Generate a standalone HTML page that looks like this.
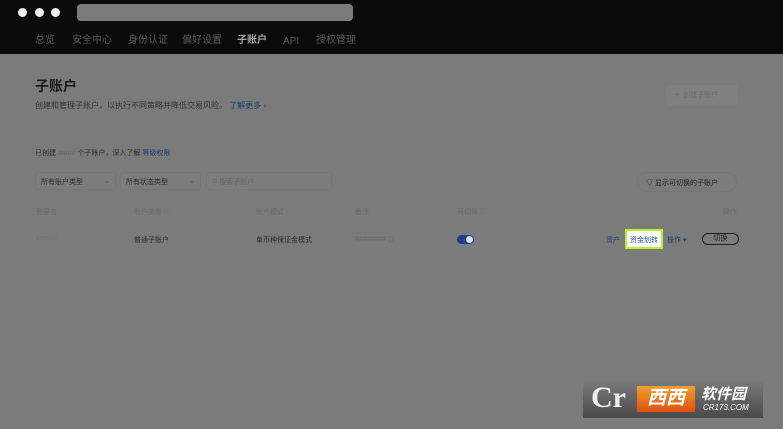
<!DOCTYPE html>
<html><head><meta charset="utf-8"><style>
*{margin:0;padding:0;box-sizing:border-box}
body{width:783px;height:429px;overflow:hidden;background:#7b7b7b;font-family:"Liberation Sans","Noto Sans CJK SC",sans-serif;position:relative;color:#222}
.top{position:absolute;left:0;top:0;width:783px;height:54px;background:#0b0b0b}
.dot{position:absolute;top:8px;width:9px;height:9px;border-radius:50%;background:#f2f2f2}
.url{position:absolute;left:77px;top:4px;width:276px;height:17px;border-radius:4px;background:#7a7a7a}
.nav{position:absolute;top:35px;font-size:10px;line-height:12px;color:#5a5a5a}
.a{position:absolute;white-space:nowrap}
.sel{position:absolute;height:18px;border:1px solid #767676;border-radius:3px;background:#7c7c7c;font-size:7px;color:#2a2a2a;padding:4px 5px}
.th{position:absolute;top:207px;font-size:7px;color:#6a6a6a}
.td{position:absolute;top:235px;font-size:7px;color:#2a2a2a}
.blue{color:#1e3d73}
</style></head><body>
<div class="top">
<div class="dot" style="left:18px"></div><div class="dot" style="left:35px"></div><div class="dot" style="left:51px"></div>
<div class="url"></div>
<div class="nav" style="left:35px">总览</div>
<div class="nav" style="left:72px">安全中心</div>
<div class="nav" style="left:128px">身份认证</div>
<div class="nav" style="left:182px">偏好设置</div>
<div class="nav" style="left:237px;color:#a8a8a8;font-weight:bold">子账户</div>
<div class="nav" style="left:283px;top:36px">API</div>
<div class="nav" style="left:316px">授权管理</div>
</div>
<div class="a" style="left:35px;top:76px;font-size:14px;font-weight:bold;color:#1a1a1a">子账户</div>
<div class="a" style="left:35px;top:100px;font-size:8px;color:#333">创建和管理子账户，以执行不同策略并降低交易风险。 <span class="blue">了解更多 ›</span></div>
<div class="a" style="left:666px;top:85px;width:72px;height:20px;border-radius:4px;background:#808080;font-size:7px;color:#6a6a6a;padding:5px 8px">＋ 创建子账户</div>
<div class="a" style="left:35px;top:148px;font-size:7px;color:#2a2a2a">已创建 <span style="color:#666">##/##</span> 个子账户，深入了解 <span class="blue">等级权限</span></div>
<div class="sel" style="left:35px;top:172px;width:81px">所有账户类型<span style="float:right;color:#555">⌄</span></div>
<div class="sel" style="left:120px;top:172px;width:81px">所有状态类型<span style="float:right;color:#555">⌄</span></div>
<div class="sel" style="left:206px;top:172px;width:126px;color:#666">⚲ 搜索子账户</div>
<div class="a" style="left:637px;top:172px;width:100px;height:20px;border:1px solid #767676;border-radius:10px;font-size:7px;color:#222;padding:5px 8px">▽ 显示可切换的子账户</div>
<div class="th" style="left:36px">登录名</div>
<div class="th" style="left:134px">账户类型 ⓘ</div>
<div class="th" style="left:256px">账户模式</div>
<div class="th" style="left:355px">备注</div>
<div class="th" style="left:457px">可切换 ⓘ</div>
<div class="th" style="left:723px">操作</div>
<div class="td" style="left:36px;color:#707070">xxxxxx</div>
<div class="td" style="left:134px">普通子账户</div>
<div class="td" style="left:256px">单币种保证金模式</div>
<div class="td" style="left:355px;color:#666">######## ◻</div>
<div class="a" style="left:457px;top:235px;width:17px;height:9px;border-radius:5px;background:#1c3f8a"><div style="position:absolute;right:1px;top:1px;width:7px;height:7px;border-radius:50%;background:#ddd"></div></div>
<div class="td blue" style="left:606px">资产</div>
<div class="a" style="left:625px;top:229px;width:38px;height:20px;border:2px solid #b8f02a;background:#fff;font-size:7px;color:#1e4fa0;padding:4px 3px">资金划转</div>
<div class="td blue" style="left:667px">操作 ▾</div>
<div class="a" style="left:702px;top:233px;width:37px;height:12px;border:1px solid #222;border-radius:6px;font-size:7px;text-align:center;line-height:10px">切换</div>
<div class="a" style="left:583px;top:379px;width:180px;height:39px;background:linear-gradient(#7d7d7d,#4a4a4a)">
<div class="a" style="left:8px;top:2px;font-size:30px;font-weight:bold;color:#eee;font-family:'Liberation Serif',serif">Cr</div>
<div class="a" style="left:54px;top:7px;width:58px;height:26px;background:linear-gradient(#f0a030,#e05010);font-size:19px;font-weight:bold;color:#fff;text-align:center;line-height:26px;font-style:italic">西西</div>
<div class="a" style="left:118px;top:4px;font-size:15px;font-weight:bold;color:#fff;font-style:italic">软件园</div>
<div class="a" style="left:120px;top:24px;font-size:8px;color:#fff;font-style:italic">CR173.COM</div>
</div>
</body></html>
